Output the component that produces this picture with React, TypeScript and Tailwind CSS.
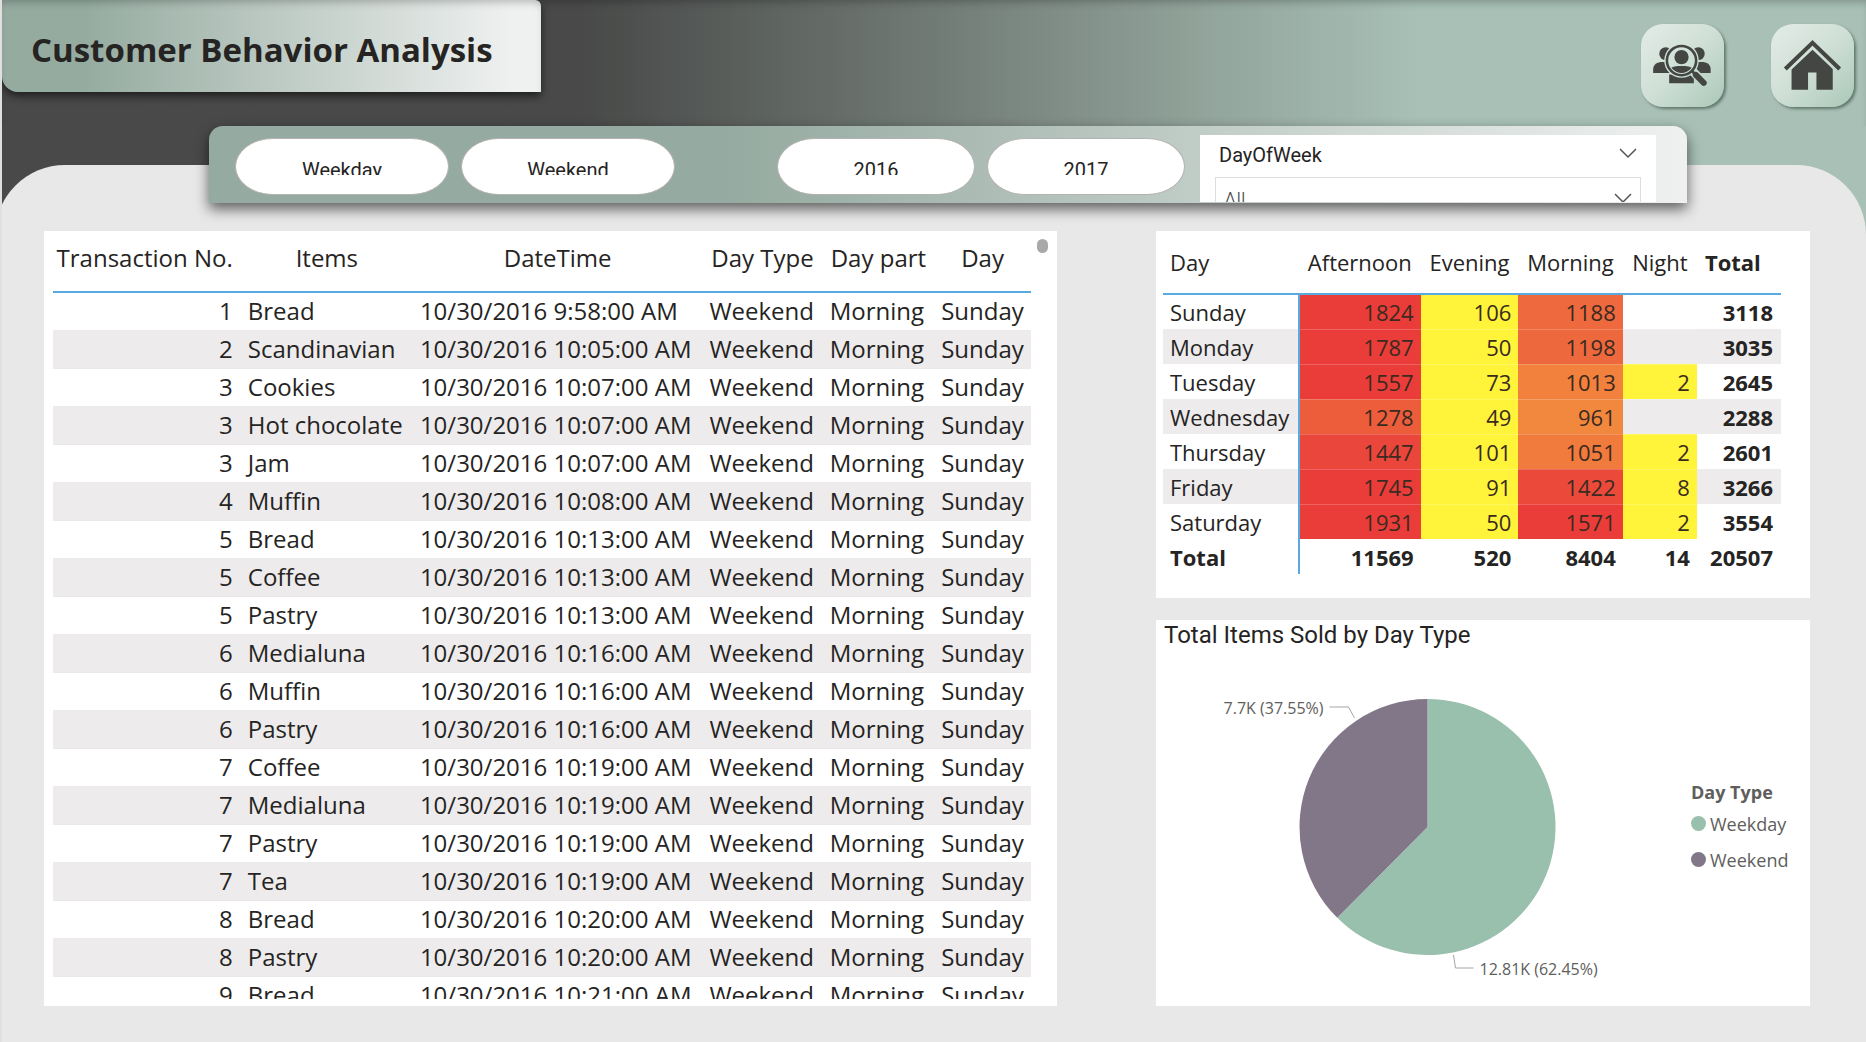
import React from "react";

type Sale = [number, string, string];

const sales: Sale[] = [
  [1, "Bread", "9:58:00"],
  [2, "Scandinavian", "10:05:00"],
  [3, "Cookies", "10:07:00"],
  [3, "Hot chocolate", "10:07:00"],
  [3, "Jam", "10:07:00"],
  [4, "Muffin", "10:08:00"],
  [5, "Bread", "10:13:00"],
  [5, "Coffee", "10:13:00"],
  [5, "Pastry", "10:13:00"],
  [6, "Medialuna", "10:16:00"],
  [6, "Muffin", "10:16:00"],
  [6, "Pastry", "10:16:00"],
  [7, "Coffee", "10:19:00"],
  [7, "Medialuna", "10:19:00"],
  [7, "Pastry", "10:19:00"],
  [7, "Tea", "10:19:00"],
  [8, "Bread", "10:20:00"],
  [8, "Pastry", "10:20:00"],
  [9, "Bread", "10:21:00"],
];

const YELLOW = "bg-[#fff43a]";
const RED = "bg-[#ea3d3a]";

type Cell = { value: string; color: string };
const cell = (value: string, color: string): Cell => ({ value, color });

const matrix: { day: string; cells: Cell[]; total: number }[] = [
  { day: "Sunday", cells: [cell("1824", RED), cell("106", YELLOW), cell("1188", "bg-[#ee693d]"), cell("", "")], total: 3118 },
  { day: "Monday", cells: [cell("1787", RED), cell("50", YELLOW), cell("1198", "bg-[#ee683d]"), cell("", "")], total: 3035 },
  { day: "Tuesday", cells: [cell("1557", RED), cell("73", YELLOW), cell("1013", "bg-[#f1813d]"), cell("2", YELLOW)], total: 2645 },
  { day: "Wednesday", cells: [cell("1278", "bg-[#ed5d3c]"), cell("49", YELLOW), cell("961", "bg-[#f2883d]"), cell("", "")], total: 2288 },
  { day: "Thursday", cells: [cell("1447", "bg-[#eb463b]"), cell("101", YELLOW), cell("1051", "bg-[#f07b3d]"), cell("2", YELLOW)], total: 2601 },
  { day: "Friday", cells: [cell("1745", RED), cell("91", YELLOW), cell("1422", "bg-[#eb4a3b]"), cell("8", YELLOW)], total: 3266 },
  { day: "Saturday", cells: [cell("1931", RED), cell("50", YELLOW), cell("1571", RED), cell("2", YELLOW)], total: 3554 },
];

function Chevron({ className = "" }: { className?: string }) {
  return (
    <svg className={className} width="20" height="12" viewBox="0 0 20 12" fill="none" stroke="#555" strokeWidth="1.5" aria-hidden="true">
      <path d="M2 2 L10 10 L18 2" />
    </svg>
  );
}

function HouseIcon() {
  return (
    <svg viewBox="0 0 84 84" className="size-full" fill="#444644" aria-hidden="true">
      <path d="M14.5 45.5 L42 19 L69.500 45.500" fill="none" stroke="#444644" strokeWidth="4.200" />
      <path d="M42 26 L62.500 45.500 V66.500 H46 V49 H37.500 V66.500 H20.800 V46 Z" />
    </svg>
  );
}

function CustomersIcon() {
  return (
    <svg viewBox="0 0 84 84" className="size-full" fill="#444644" aria-hidden="true">
      <mask id="around-lens">
        <rect width="84" height="84" fill="#fff" />
        <circle cx="41" cy="37" r="17.500" fill="#000" />
        <path d="M52.500 48 L64 60" stroke="#000" strokeWidth="9" strokeLinecap="round" />
      </mask>
      <clipPath id="in-lens">
        <circle cx="41" cy="37" r="12.500" />
      </clipPath>
      <g mask="url(#around-lens)">
        <ellipse cx="25" cy="30" rx="6.500" ry="6.500" />
        <ellipse cx="58" cy="30" rx="6.500" ry="6.500" />
        <path d="M12.300 49.700 V46 C12.300 41 16 38.500 22 38.500 H30 V49.700 Z" />
        <path d="M70.500 49.700 V46 C70.500 41 67 38.500 61 38.500 H52 V49.700 Z" />
        <path d="M28.500 60 V51 H53.500 V60 Z" />
      </g>
      <circle cx="41" cy="33.500" r="7.200" />
      <path clipPath="url(#in-lens)" d="M28 51 V46 C31 43 36 42.500 41 42.500 C46 42.500 51 43 54 46 V51 Z" />
      <circle cx="41" cy="37" r="14.800" fill="none" stroke="#444644" strokeWidth="2.600" />
      <path d="M51.500 47.500 L55 51" stroke="#444644" strokeWidth="3" />
      <path d="M55.500 51.500 L63.500 59.500" stroke="#444644" strokeWidth="6" strokeLinecap="round" />
    </svg>
  );
}

function IconButton({ label, children }: { label: string; children: React.ReactNode }) {
  return (
    <button
      aria-label={label}
      className="size-[83px] rounded-[22px] bg-linear-to-br from-[#e3ece7] via-[#cfdfd6] to-[#a9c8b8] shadow-[2px_2px_3px_rgba(60,80,70,0.65)]"
    >
      {children}
    </button>
  );
}

function Pill({ label, width }: { label: string; width: string }) {
  return (
    <button
      className={`${width} flex h-[57px] items-start justify-center rounded-[38px/50%] border border-[#b5b3b1] bg-white pt-[19px] text-xl leading-6 text-[#252423]`}
    >
      <span className="block h-[17px] overflow-hidden">{label}</span>
    </button>
  );
}

function Slicers() {
  return (
    <nav className="relative z-10 mr-[179px] ml-[207px] flex h-[77px] items-start rounded-t-[14px] bg-linear-to-r from-[#95aaa0] from-35% to-[#eff1f0] pl-[26px] font-[Roboto,sans-serif] shadow-[0_6px_14px_rgba(0,0,0,0.6)]">
      <div className="flex gap-3 pt-3">
        <Pill label="Weekday" width="w-[214px]" />
        <Pill label="Weekend" width="w-[214px]" />
      </div>
      <div className="ml-auto flex gap-3 pt-3">
        <Pill label="2016" width="w-[198px]" />
        <Pill label="2017" width="w-[198px]" />
      </div>
      <div className="mt-[9px] mr-[31px] ml-[15px] h-[67px] w-[456px] overflow-hidden bg-white px-[15px] pt-2">
        <div className="flex items-start justify-between pr-[3px] pl-1">
          <label htmlFor="day-of-week" className="text-xl leading-6 text-[#252423]">
            DayOfWeek
          </label>
          <Chevron className="mt-1" />
        </div>
        <div className="relative mt-[10px]">
          <select id="day-of-week" className="h-10 w-full appearance-none border border-[#dddddd] bg-white px-2 pt-1.5 text-xl font-light text-[#444]">
            <option>All</option>
          </select>
          <Chevron className="pointer-events-none absolute top-[15px] right-2" />
        </div>
      </div>
    </nav>
  );
}

function SalesTable() {
  return (
    <section className="relative min-h-0 bg-white pt-2 pr-[26px] pb-[7px] pl-[9px]">
      <div className="h-full overflow-hidden">
        <table className="w-full table-fixed border-collapse text-2xl leading-8 whitespace-nowrap text-[#252423]">
          <colgroup>
            <col className="w-[19.200%]" />
            <col className="w-[17.600%]" />
            <col className="w-[29.600%]" />
            <col className="w-[12.300%]" />
            <col className="w-[11.400%]" />
            <col />
          </colgroup>
          <thead>
            <tr className="h-[53px] border-b-2 border-[#5aa9e0] align-top">
              <th className="pt-[3px] pr-2 text-right font-normal">Transaction No.</th>
              <th className="pt-[3px] font-normal">Items</th>
              <th className="pt-[3px] font-normal">DateTime</th>
              <th className="pt-[3px] font-normal">Day Type</th>
              <th className="pt-[3px] font-normal">Day part</th>
              <th className="pt-[3px] font-normal">Day</th>
            </tr>
          </thead>
          <tbody>
            {sales.map(([no, item, time], i) => (
              <tr key={i} className="h-[38px] border-b border-[#ebe9ea] even:bg-[#edebec]">
                <td className="pr-2 text-right">{no}</td>
                <td className="pl-[7px]">{item}</td>
                <td className="pl-[7px]">10/30/2016 {time} AM</td>
                <td className="pl-[7px]">Weekend</td>
                <td className="pl-[7px]">Morning</td>
                <td className="pl-[7px]">Sunday</td>
              </tr>
            ))}
          </tbody>
        </table>
      </div>
      <div className="absolute top-2 right-[9px] h-[14px] w-[11px] rounded-full bg-[#a9a9a9]" />
    </section>
  );
}

function DayMatrix() {
  return (
    <section className="bg-white pt-[9px] pr-[29px] pb-6 pl-[7px]">
      <table className="w-full table-fixed border-collapse text-[22px] leading-7 whitespace-nowrap text-[#252423]">
        <colgroup>
          <col className="w-[22%]" />
          <col className="w-[19.700%]" />
          <col className="w-[15.800%]" />
          <col className="w-[16.900%]" />
          <col className="w-[12%]" />
          <col />
        </colgroup>
        <thead>
          <tr className="h-[54px] border-b-2 border-[#5aa9e0] align-top">
            <th className="pt-2 pl-[7px] text-left font-normal">Day</th>
            <th className="pt-2 font-normal">Afternoon</th>
            <th className="pt-2 font-normal">Evening</th>
            <th className="pt-2 font-normal">Morning</th>
            <th className="pt-2 font-normal">Night</th>
            <th className="pt-2 pl-2 text-left font-bold">Total</th>
          </tr>
        </thead>
        <tbody>
          {matrix.map((row) => (
            <tr key={row.day} className="h-[35px] even:bg-[#edebec]">
              <th className="border-r-2 border-[#5aa9e0] pl-[7px] text-left font-normal">{row.day}</th>
              {row.cells.map((c, i) => (
                <td key={i} className={`border-b border-white/20 pr-[7px] text-right text-[#3a2a20] ${c.color}`}>
                  {c.value}
                </td>
              ))}
              <td className="pr-2 text-right font-bold">{row.total}</td>
            </tr>
          ))}
        </tbody>
        <tfoot>
          <tr className="h-[35px] font-bold">
            <th className="border-r-2 border-[#5aa9e0] pl-[7px] text-left">Total</th>
            <td className="pr-[7px] text-right">11569</td>
            <td className="pr-[7px] text-right">520</td>
            <td className="pr-[7px] text-right">8404</td>
            <td className="pr-[7px] text-right">14</td>
            <td className="pr-2 text-right">20507</td>
          </tr>
        </tfoot>
      </table>
    </section>
  );
}

function DayTypePie() {
  return (
    <section className="flex min-h-0 flex-1 flex-col bg-white">
      <h2 className="pt-px pl-2 font-[Roboto,sans-serif] text-2xl leading-7 text-[#252423]">Total Items Sold by Day Type</h2>
      <div className="flex min-h-0 flex-1 items-center justify-between">
        <svg viewBox="7 0 520 357" className="h-full min-w-0 flex-1 text-base" fill="#605e5c" role="img" aria-label="Total items sold by day type">
          <path d="M271 178 V50 A128 128 0 1 1 180.800 268.800 Z" fill="#99bfad" />
          <path d="M271 178 L180.800 268.800 A128 128 0 0 1 271 50 Z" fill="#827689" />
          <path d="M173 58 H192 L198 69" fill="none" stroke="#a6a6a6" />
          <path d="M297 306 L299 319 H317" fill="none" stroke="#a6a6a6" />
          <text x="167" y="65" textAnchor="end">7.7K (37.55%)</text>
          <text x="323" y="326">12.81K (62.45%)</text>
        </svg>
        <div className="w-[119px] text-lg leading-[36px] text-[#605e5c]">
          <div className="leading-7 font-bold">Day Type</div>
          <div className="flex items-center gap-1">
            <span className="size-[15px] rounded-full bg-[#99bfad]" />
            Weekday
          </div>
          <div className="flex items-center gap-1">
            <span className="size-[15px] rounded-full bg-[#827689]" />
            Weekend
          </div>
        </div>
      </div>
    </section>
  );
}

export default function App() {
  return (
    <div className="flex h-screen flex-col overflow-hidden border-l-2 border-[#dfe1e0] bg-linear-to-r from-[#484948] from-31% via-[#93a59c] via-65% to-[#a8c0b6] to-76% font-['Open_Sans','Noto_Sans',sans-serif]">
      <header className="flex h-[126px] shrink-0 items-start justify-between shadow-[inset_0_6px_8px_-4px_rgba(0,0,0,0.25)]">
        <div className="flex h-[92px] w-[539px] items-center rounded-tr-md rounded-bl-2xl bg-linear-to-r from-[#95aba0] from-15% to-[#eff1f0] to-95% pt-[7px] pl-[29px] shadow-[inset_0_6px_8px_-4px_rgba(0,0,0,0.25),0_4px_8px_rgba(0,0,0,0.6)]">
          <h1 className="text-[33px] leading-[46px] font-bold whitespace-nowrap text-[#252423]">Customer Behavior Analysis</h1>
        </div>
        <div className="flex gap-[47px] pt-6 pr-3">
          <IconButton label="Customers">
            <CustomersIcon />
          </IconButton>
          <IconButton label="Home">
            <HouseIcon />
          </IconButton>
        </div>
      </header>
      <Slicers />
      <main className="-mt-[38px] -ml-[7px] grid min-h-0 flex-1 grid-cols-[1013fr_654fr] gap-x-[99px] rounded-t-[70px] bg-[#e8e8e8] pt-[66px] pr-14 pb-9 pl-[49px]">
        <SalesTable />
        <div className="flex min-h-0 flex-col gap-[22px]">
          <DayMatrix />
          <DayTypePie />
        </div>
      </main>
    </div>
  );
}
